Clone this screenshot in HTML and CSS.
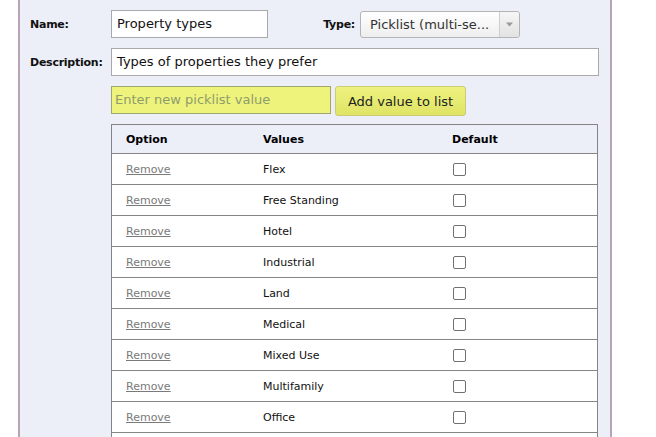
FILE: index.html
```html
<!DOCTYPE html>
<html>
<head>
<meta charset="utf-8">
<link rel="stylesheet" href="styles.css">
</head>
<body>
<div class="page">
  <div class="panel">
    <div class="form">
      <label class="lbl">Name:</label>
      <div class="line">
        <div class="field name">Property types</div>
        <label class="lbl type-lbl">Type:</label>
        <div class="select">
          <span class="select-text">Picklist (multi-se...</span>
          <span class="select-arrow"><svg width="7" height="5" viewBox="0 0 7 5"><path d="M0 0.5 L7 0.5 L3.5 4.5 Z" fill="#9a9a9a"/></svg></span>
        </div>
      </div>
      <label class="lbl">Description:</label>
      <div class="line">
        <div class="field desc">Types of properties they prefer</div>
      </div>
      <span></span>
      <div class="line add-line">
        <div class="field newval">Enter new picklist value</div>
        <button class="add-btn">Add value to list</button>
      </div>
      <span></span>
      <table class="values">
        <thead>
          <tr><th class="c1">Option</th><th class="c2">Values</th><th class="c3">Default</th></tr>
        </thead>
        <tbody>
          <tr><td><a class="rm">Remove</a></td><td>Flex</td><td><span class="cb"></span></td></tr>
          <tr><td><a class="rm">Remove</a></td><td>Free Standing</td><td><span class="cb"></span></td></tr>
          <tr><td><a class="rm">Remove</a></td><td>Hotel</td><td><span class="cb"></span></td></tr>
          <tr><td><a class="rm">Remove</a></td><td>Industrial</td><td><span class="cb"></span></td></tr>
          <tr><td><a class="rm">Remove</a></td><td>Land</td><td><span class="cb"></span></td></tr>
          <tr><td><a class="rm">Remove</a></td><td>Medical</td><td><span class="cb"></span></td></tr>
          <tr><td><a class="rm">Remove</a></td><td>Mixed Use</td><td><span class="cb"></span></td></tr>
          <tr><td><a class="rm">Remove</a></td><td>Multifamily</td><td><span class="cb"></span></td></tr>
          <tr><td><a class="rm">Remove</a></td><td>Office</td><td><span class="cb"></span></td></tr>
          <tr class="spacer"><td></td><td></td><td></td></tr>
        </tbody>
      </table>
    </div>
  </div>
</div>
</body>
</html>
```
FILE: styles.css
```css
html, body {
  margin: 0;
  padding: 0;
  background: #ffffff;
  overflow: hidden;
}
body {
  font-family: "DejaVu Sans", Verdana, sans-serif;
  color: #111;
}
.page {
  padding-left: 18px;
  height: 437px;
  overflow: hidden;
}
.panel {
  width: 569px;
  min-height: 600px;
  background: #eceef8;
  border-left: 2px solid #b9a3b5;
  border-right: 2px solid #b9a3b5;
  padding: 10px 11px 0 10px;
  box-sizing: content-box;
}
.form {
  display: grid;
  grid-template-columns: 81px 488px;
  row-gap: 10px;
  align-items: center;
}
.lbl {
  font-weight: bold;
  font-size: 11px;
  letter-spacing: -0.25px;
  color: #111;
}
.line {
  display: flex;
  align-items: center;
}
.field {
  box-sizing: border-box;
  height: 28px;
  border: 1px solid #a9a9a9;
  background: #fff;
  font-size: 13px;
  line-height: 26px;
  padding: 0 5px;
  white-space: nowrap;
}
.name { width: 157px; }
.type-lbl {
  width: 92px;
  text-align: right;
  padding-right: 5px;
  box-sizing: border-box;
}
.select {
  box-sizing: border-box;
  width: 160px;
  height: 27px;
  border: 1px solid #b4b4b4;
  border-radius: 3px;
  background: linear-gradient(#ffffff, #eeeeee);
  display: flex;
  align-items: stretch;
  font-size: 13px;
  color: #333;
}
.select-text {
  flex: 1;
  line-height: 25px;
  padding-left: 9px;
  white-space: nowrap;
  overflow: hidden;
}
.select-arrow {
  width: 19px;
  border-left: 1px solid #cfcfcf;
  display: flex;
  align-items: center;
  justify-content: center;
  background: linear-gradient(#f6f6f6, #e2e2e2);
  border-radius: 0 3px 3px 0;
}
.desc { width: 488px; }
.add-line {
  gap: 4px;
  align-items: flex-start;
}
.newval {
  width: 220px;
  background: #eef37c;
  border: 1px solid #9ea66a;
  color: #8f9c6c;
  padding-left: 3px;
}
.add-btn {
  box-sizing: border-box;
  width: 131px;
  height: 30px;
  margin: 0;
  border: 1px solid #c9cc72;
  border-radius: 3px;
  background: linear-gradient(#eef27f, #dfe466);
  font-family: "DejaVu Sans", Verdana, sans-serif;
  font-size: 13px;
  color: #222;
  padding: 0;
}
.values {
  margin-top: -2px;
  width: 487px;
  border-collapse: collapse;
  border: 1px solid #858585;
  font-size: 11px;
  align-self: start;
}
.values th {
  background: #eceef8;
  text-align: left;
  font-weight: bold;
  height: 28px;
  padding: 0 0 0 14px;
  border-bottom: 1px solid #858585;
  color: #000;
}
.values td {
  background: #fff;
  height: 30px;
  padding: 0 0 0 14px;
  border-top: 1px solid #858585;
  vertical-align: middle;
}
.values .c1 { width: 123px; }
.values .c2 { width: 175px; }
.rm {
  color: #7a7a7a;
  text-decoration: underline;
}
.cb {
  display: inline-block;
  width: 11px;
  height: 11px;
  border: 1px solid #707070;
  border-radius: 2px;
  background: #fff;
  vertical-align: middle;
  margin-left: 1px;
}
```
